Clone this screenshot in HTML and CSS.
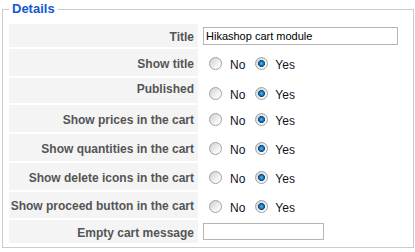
FILE: index.html
```html
<!DOCTYPE html>
<html lang="en">
<head>
    <meta charset="UTF-8">
    <meta name="viewport" content="width=device-width, initial-scale=1.0">
    <title>Hikashop cart module - Details</title>
    <link rel="stylesheet" href="styles.css">
</head>
<body>
    <fieldset class="params">
        <legend>Details</legend>
        <div class="paramlist">
            <div class="row row-input">
                <label class="key" for="title">Title</label>
                <div class="value"><input type="text" id="title" class="text text-wide" value="Hikashop cart module"></div>
            </div>
            <div class="row">
                <span class="key">Show title</span>
                <div class="value">
                    <input type="radio" name="showtitle" id="showtitle0"><label for="showtitle0">No</label>
                    <input type="radio" name="showtitle" id="showtitle1" checked><label for="showtitle1">Yes</label>
                </div>
            </div>
            <div class="row row-published">
                <span class="key">Published</span>
                <div class="value">
                    <input type="radio" name="published" id="published0"><label for="published0">No</label>
                    <input type="radio" name="published" id="published1" checked><label for="published1">Yes</label>
                </div>
            </div>
            <div class="row">
                <span class="key">Show prices in the cart</span>
                <div class="value">
                    <input type="radio" name="prices" id="prices0"><label for="prices0">No</label>
                    <input type="radio" name="prices" id="prices1" checked><label for="prices1">Yes</label>
                </div>
            </div>
            <div class="row">
                <span class="key">Show quantities in the cart</span>
                <div class="value">
                    <input type="radio" name="quantities" id="quantities0"><label for="quantities0">No</label>
                    <input type="radio" name="quantities" id="quantities1" checked><label for="quantities1">Yes</label>
                </div>
            </div>
            <div class="row">
                <span class="key">Show delete icons in the cart</span>
                <div class="value">
                    <input type="radio" name="delete" id="delete0"><label for="delete0">No</label>
                    <input type="radio" name="delete" id="delete1" checked><label for="delete1">Yes</label>
                </div>
            </div>
            <div class="row row-proceed">
                <span class="key">Show proceed button in the cart</span>
                <div class="value">
                    <input type="radio" name="proceed" id="proceed0"><label for="proceed0">No</label>
                    <input type="radio" name="proceed" id="proceed1" checked><label for="proceed1">Yes</label>
                </div>
            </div>
            <div class="row row-input">
                <label class="key" for="emptymsg">Empty cart message</label>
                <div class="value"><input type="text" id="emptymsg" class="text text-small" value=""></div>
            </div>
        </div>
    </fieldset>
</body>
</html>
```

FILE: styles.css
```css
body {
    margin: 0;
    font-family: "Liberation Sans", Arial, sans-serif;
    font-size: 12px;
    background: #ffffff;
}

.params {
    margin: 1px 1px 0 2px;
    padding: 7px 6px 4px 6px;
    border: 1px solid #cccccc;
}

.params legend {
    padding: 0 3px;
    font-size: 13px;
    line-height: 16px;
    font-weight: bold;
    color: #1557d2;
}

.paramlist {
    display: flex;
    flex-direction: column;
    gap: 2px;
}

.row {
    display: grid;
    grid-template-columns: 189px 1fr;
    column-gap: 2px;
    height: 27px;
}

.row-input {
    height: 23px;
}

.row-published {
    height: 25px;
}

.row-proceed {
    height: 26px;
}

.key {
    display: flex;
    align-items: center;
    justify-content: flex-end;
    padding: 2px 4px 0 0;
    background: #f4f4f4;
    color: #555555;
    font-weight: bold;
    text-align: right;
}

.row-published .key {
    padding-top: 0;
    padding-bottom: 4px;
}

.value {
    display: flex;
    align-items: center;
    padding-left: 3px;
    padding-top: 5px;
    color: #111122;
}

.row-input .value {
    padding-top: 0;
}

.row-published .value {
    padding-top: 8px;
}

.value input[type="radio"] {
    appearance: none;
    -webkit-appearance: none;
    width: 13px;
    height: 13px;
    margin: -3px 8px 0 6px;
    border: 1px solid #a2a2a2;
    border-radius: 50%;
    background: linear-gradient(135deg, #cfcfcf, #f7f7f7 70%, #ffffff);
}

.value input[type="radio"] + label + input[type="radio"] {
    margin-left: 10px;
    margin-right: 7px;
}

.value input[type="radio"]:checked {
    background: radial-gradient(circle, #63b8ec 0, #1a74b4 2px, #0b4f84 3.2px, transparent 3.8px),
                linear-gradient(135deg, #cfcfcf, #f7f7f7 70%, #ffffff);
}

.text {
    box-sizing: border-box;
    height: 18px;
    padding: 0 2px;
    border: 1px solid #b6b6b6;
    font-family: "Liberation Sans", Arial, sans-serif;
    font-size: 11px;
    color: #000000;
}

.text-wide {
    width: 195px;
}

.text-small {
    width: 121px;
    height: 17px;
}
```
